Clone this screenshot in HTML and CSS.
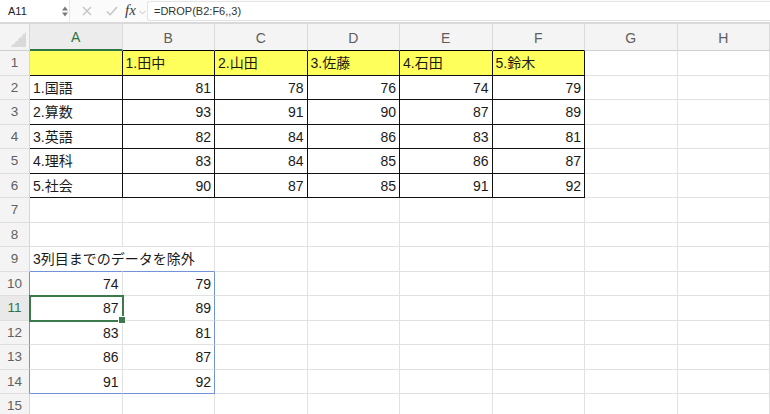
FILE: index.html
```html
<!DOCTYPE html>
<html lang="ja">
<head>
<meta charset="utf-8">
<title>DROP</title>
<link rel="stylesheet" href="styles.css">
</head>
<body>
<div class="app">
  <div class="fbar">
    <div class="namebox">
      <span class="name">A11</span>
      <svg class="spin" width="6" height="11" viewBox="0 0 6 11"><path d="M0 4.5 L3 0.5 L6 4.5 Z M0 6.5 L3 10.5 L6 6.5 Z" fill="#7a7a7a"/></svg>
    </div>
    <div class="ficons">
      <svg class="ico-x" width="10" height="10" viewBox="0 0 10 10"><path d="M1 1 L9 9 M9 1 L1 9" stroke="#c4c4c4" stroke-width="1.4" fill="none"/></svg>
      <svg class="ico-ok" width="12" height="10" viewBox="0 0 12 10"><path d="M1 5.5 L4.2 8.8 L11 1" stroke="#c4c4c4" stroke-width="1.4" fill="none"/></svg>
      <span class="fx">fx</span>
      <svg class="ico-chev" width="7" height="5" viewBox="0 0 7 5"><path d="M0.5 0.8 L3.5 4 L6.5 0.8" stroke="#c4c4c4" stroke-width="1" fill="none"/></svg>
    </div>
    <div class="finput">=DROP(B2:F6,,3)</div>
  </div>

  <div class="sheet">
    <div class="corner"></div>
    <div class="ch sel-col">A</div><div class="ch tb">B</div><div class="ch tb">C</div><div class="ch tb">D</div><div class="ch tb">E</div><div class="ch tb">F</div><div class="ch">G</div><div class="ch">H</div>

    <div class="rh">1</div>
    <div class="c t y"></div><div class="c t y">1.田中</div><div class="c t y">2.山田</div><div class="c t y">3.佐藤</div><div class="c t y">4.石田</div><div class="c t y">5.鈴木</div><div class="c"></div><div class="c"></div>

    <div class="rh">2</div>
    <div class="c t">1.国語</div><div class="c t n">81</div><div class="c t n">78</div><div class="c t n">76</div><div class="c t n">74</div><div class="c t n">79</div><div class="c"></div><div class="c"></div>

    <div class="rh">3</div>
    <div class="c t">2.算数</div><div class="c t n">93</div><div class="c t n">91</div><div class="c t n">90</div><div class="c t n">87</div><div class="c t n">89</div><div class="c"></div><div class="c"></div>

    <div class="rh">4</div>
    <div class="c t">3.英語</div><div class="c t n">82</div><div class="c t n">84</div><div class="c t n">86</div><div class="c t n">83</div><div class="c t n">81</div><div class="c"></div><div class="c"></div>

    <div class="rh">5</div>
    <div class="c t">4.理科</div><div class="c t n">83</div><div class="c t n">84</div><div class="c t n">85</div><div class="c t n">86</div><div class="c t n">87</div><div class="c"></div><div class="c"></div>

    <div class="rh">6</div>
    <div class="c t">5.社会</div><div class="c t n">90</div><div class="c t n">87</div><div class="c t n">85</div><div class="c t n">91</div><div class="c t n">92</div><div class="c"></div><div class="c"></div>

    <div class="rh">7</div>
    <div class="c"></div><div class="c"></div><div class="c"></div><div class="c"></div><div class="c"></div><div class="c"></div><div class="c"></div><div class="c"></div>

    <div class="rh">8</div>
    <div class="c"></div><div class="c"></div><div class="c"></div><div class="c"></div><div class="c"></div><div class="c"></div><div class="c"></div><div class="c"></div>

    <div class="rh">9</div>
    <div class="c spill-top over">3列目までのデータを除外</div><div class="c spill-top"></div><div class="c"></div><div class="c"></div><div class="c"></div><div class="c"></div><div class="c"></div><div class="c"></div>

    <div class="rh spill-left">10</div>
    <div class="c n">74</div><div class="c n spill-right">79</div><div class="c"></div><div class="c"></div><div class="c"></div><div class="c"></div><div class="c"></div><div class="c"></div>

    <div class="rh spill-left sel-row">11</div>
    <div class="c n active">87</div><div class="c n spill-right">89</div><div class="c"></div><div class="c"></div><div class="c"></div><div class="c"></div><div class="c"></div><div class="c"></div>

    <div class="rh spill-left">12</div>
    <div class="c n">83</div><div class="c n spill-right">81</div><div class="c"></div><div class="c"></div><div class="c"></div><div class="c"></div><div class="c"></div><div class="c"></div>

    <div class="rh spill-left">13</div>
    <div class="c n">86</div><div class="c n spill-right">87</div><div class="c"></div><div class="c"></div><div class="c"></div><div class="c"></div><div class="c"></div><div class="c"></div>

    <div class="rh spill-left">14</div>
    <div class="c n spill-bottom">91</div><div class="c n spill-right spill-bottom">92</div><div class="c"></div><div class="c"></div><div class="c"></div><div class="c"></div><div class="c"></div><div class="c"></div>

    <div class="rh">15</div>
    <div class="c"></div><div class="c"></div><div class="c"></div><div class="c"></div><div class="c"></div><div class="c"></div><div class="c"></div><div class="c"></div>
  </div>
</div>
</body>
</html>
```

FILE: styles.css
```css
* { box-sizing: border-box; }

html, body {
  margin: 0;
  padding: 0;
  width: 770px;
  height: 414px;
  overflow: hidden;
  background: #ffffff;
}

body {
  font-family: "Liberation Sans", "Noto Sans CJK JP", sans-serif;
  color: #1a1a1a;
}

.app {
  width: 770px;
}

/* ---------- formula bar ---------- */
.fbar {
  height: 24px;
  display: flex;
  align-items: stretch;
  background: #fbfbfb;
  border-bottom: 2px solid #d9d9d9;
}

.namebox {
  width: 70px;
  display: flex;
  align-items: center;
  background: #ffffff;
  border-right: 1px solid #e6e6e6;
}

.name {
  width: 62px;
  padding-left: 8px;
  font-size: 11px;
  color: #222;
}

.spin {
  display: block;
}

.ficons {
  width: 77px;
  display: flex;
  align-items: center;
  padding-left: 12px;
}

.ico-x { display: block; margin-right: 14px; }
.ico-ok { display: block; margin-right: 7px; }

.fx {
  font-family: "Liberation Serif", serif;
  font-style: italic;
  font-size: 15px;
  color: #3a3a3a;
  margin-right: 3px;
  line-height: 1;
  padding-bottom: 2px;
}

.ico-chev { display: block; margin-top: 2px; }

.finput {
  flex: 1;
  margin: 1px 0 1px 0;
  background: #ffffff;
  border: 1px solid #e4e4e4;
  border-right: none;
  border-radius: 3px 0 0 3px;
  font-size: 11px;
  color: #333;
  display: flex;
  align-items: center;
  padding-left: 6px;
}

/* ---------- sheet grid ---------- */
.sheet {
  display: grid;
  grid-template-columns: 30px repeat(8, 92.5px);
  grid-template-rows: 27px repeat(15, 24.5px);
}

.corner {
  position: relative;
  background: #f4f4f4;
  border-right: 1px solid #d8d8d8;
  border-bottom: 1px solid #cfcfcf;
}

.corner::after {
  content: "";
  position: absolute;
  right: 3px;
  bottom: 3px;
  width: 15px;
  height: 15px;
  background: linear-gradient(to top left, #d9d9d9 50%, transparent 50%);
}

.ch {
  background: #f4f4f4;
  border-right: 1px solid #dadada;
  border-bottom: 1px solid #cfcfcf;
  display: flex;
  align-items: center;
  justify-content: center;
  font-size: 14px;
  color: #5e5e5e;
  padding-top: 1px;
}

.ch.tb {
  border-bottom-color: #000;
}

.ch.sel-col {
  color: #2f7446;
  border-bottom: 2px solid #2f7446;
  background: #ececec;
}

.rh {
  background: #f4f4f4;
  border-right: 1px solid #d6d6d6;
  border-bottom: 1px solid #dedede;
  display: flex;
  align-items: center;
  justify-content: center;
  font-size: 13.5px;
  color: #616161;
}

.rh.sel-row {
  background: #e9e9e9;
  color: #2f7446;
}

.c {
  border-right: 1px solid #e1e1e1;
  border-bottom: 1px solid #e1e1e1;
  display: flex;
  align-items: center;
  padding: 1px 3px 0 3px;
  font-size: 14px;
  line-height: 16px;
  white-space: nowrap;
  min-width: 0;
}

.c.n {
  justify-content: flex-end;
}

.c.t {
  border-right-color: #111;
  border-bottom-color: #111;
}

.c.y {
  background: #ffff5c;
}

.c.over {
  overflow: visible;
  border-right-color: transparent;
}

/* spill range (A10:B14) */
.spill-top { border-bottom-color: #7393d8 !important; }
.spill-right { border-right-color: #7393d8 !important; }
.spill-bottom { border-bottom-color: #7393d8 !important; }
.rh.spill-left { border-right-color: #7393d8; }

/* active cell A11 */
.c.active {
  position: relative;
  z-index: 2;
  outline: 2px solid #3c7a4e;
  outline-offset: -1px;
}

.c.active::after {
  content: "";
  position: absolute;
  right: -4px;
  bottom: -4px;
  width: 6px;
  height: 6px;
  background: #3c7a4e;
  border: 1px solid #ffffff;
}
```
